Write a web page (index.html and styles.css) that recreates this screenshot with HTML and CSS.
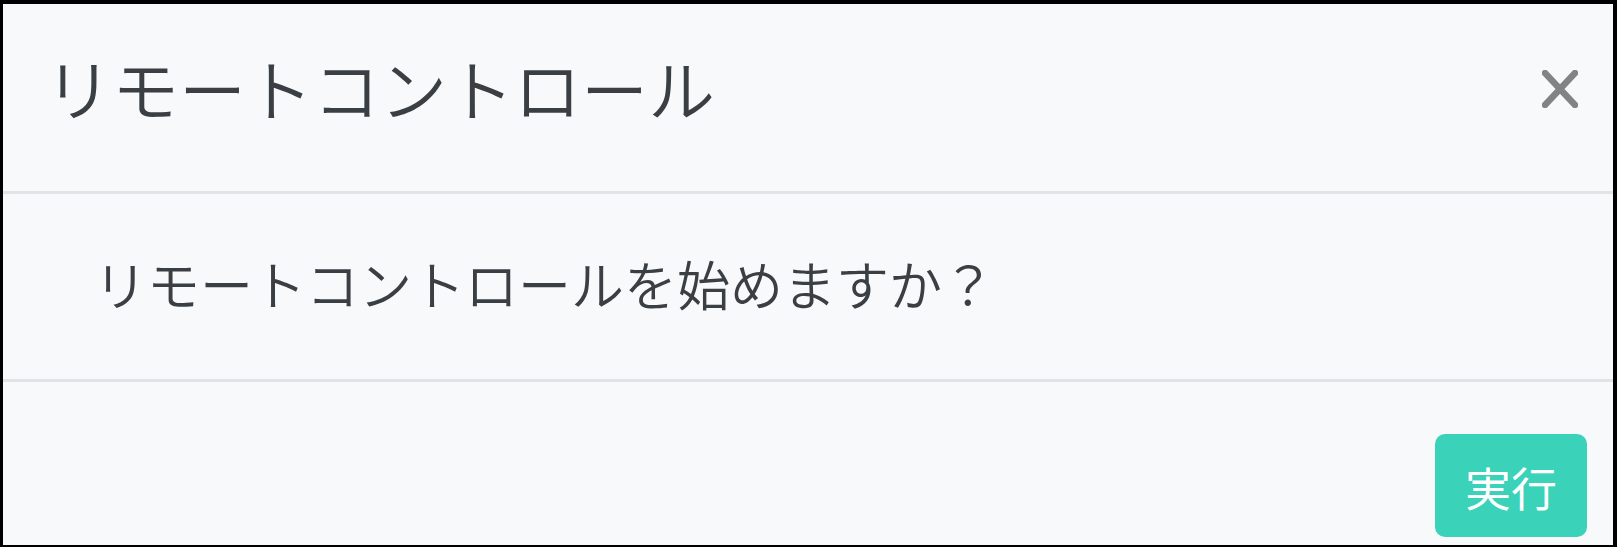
FILE: index.html
```html
<!DOCTYPE html>
<html lang="ja">
<head>
<meta charset="utf-8">
<title>リモートコントロール</title>
<link rel="stylesheet" href="styles.css">
</head>
<body>
<div class="modal">
  <div class="modal-header">
    <h5 class="modal-title">リモートコントロール</h5>
    <button class="close" type="button" aria-label="Close">
      <svg viewBox="0 0 36 38" width="36" height="38" aria-hidden="true">
        <path d="M3 3 L33 35 M33 3 L3 35" stroke="#828384" stroke-width="6.5" stroke-linecap="round" fill="none"/>
      </svg>
    </button>
  </div>
  <div class="modal-body">
    <p class="message">リモートコントロールを始めますか？</p>
  </div>
  <div class="modal-footer">
    <button class="btn-run" type="button">実行</button>
  </div>
</div>
</body>
</html>
```

FILE: styles.css
```css
html, body {
  margin: 0;
  padding: 0;
  height: 100%;
  background: #000;
}
body {
  display: flex;
  padding: 4px 4px 2px 3px;
  box-sizing: border-box;
  font-family: "Noto Sans CJK JP", "Noto Sans", sans-serif;
  color: #3a3f44;
}
.modal {
  flex: 1;
  display: flex;
  flex-direction: column;
  background: #f8f9fa;
}
.modal-header {
  height: 190px;
  box-sizing: border-box;
  display: flex;
  align-items: flex-start;
  justify-content: space-between;
  padding: 49px 35px 0 42px;
  border-bottom: 3px solid #e1e3e6;
}
.modal-title {
  margin: 0;
  font-size: 67px;
  font-weight: 350;
  line-height: 1;
  color: #3a3f44;
}
.close {
  border: 0;
  background: none;
  padding: 0;
  width: 36px;
  height: 38px;
  display: block;
  margin-top: 17px;
}
.close svg { display: block; }
.modal-body {
  height: 188px;
  box-sizing: border-box;
  display: flex;
  align-items: center;
  padding: 0 0 6px 91px;
  border-bottom: 3px solid #e1e3e6;
}
.message {
  margin: 0;
  font-size: 53px;
  font-weight: 350;
  line-height: 1;
}
.modal-footer {
  flex: 1;
  display: flex;
  justify-content: flex-end;
  align-items: flex-start;
  padding: 52px 26px 0 0;
}
.btn-run {
  width: 152px;
  height: 103px;
  border: 0;
  border-radius: 10px;
  background: #3ad2b8;
  color: #fff;
  font-family: "Noto Sans CJK JP", "Noto Sans", sans-serif;
  font-size: 46px;
  font-weight: 400;
  padding: 0;
}
```
